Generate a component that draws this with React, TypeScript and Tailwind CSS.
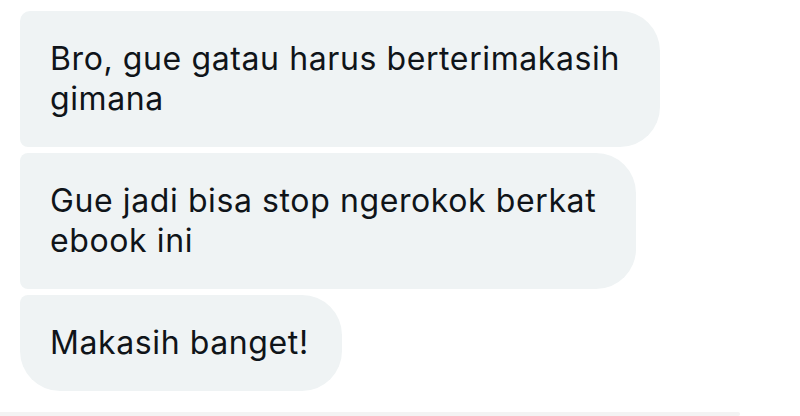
const messages = [
  { text: "Bro, gue gatau harus berterimakasih gimana", width: "w-[640px]", corners: "rounded-tl-[10px] rounded-bl-[8px]" },
  { text: "Gue jadi bisa stop ngerokok berkat ebook ini", width: "w-[616px]", corners: "rounded-tl-[8px] rounded-bl-[8px]" },
  { text: "Makasih banget!", width: "w-fit", corners: "rounded-tl-[8px] rounded-bl-[40px]" },
];

export default function App() {
  return (
    <div className="w-[800px] h-[416px] bg-white overflow-hidden flex flex-col font-['Inter',sans-serif]">
      <div className="flex flex-col gap-[6px] pl-5 pt-[11px]">
        {messages.map((m, i) => (
          <div
            key={i}
            className={`${m.width} ${m.corners} rounded-r-[40px] bg-[#eff3f4] pl-[30px] pr-[33px] py-[28px] text-[32px] leading-[40px] tracking-[0.6px] text-[#0f1419]`}
          >
            {m.text}
          </div>
        ))}
      </div>
      <div className="mt-auto h-[4px] w-[740px] bg-[#f3f3f3] rounded-r-full"></div>
    </div>
  );
}
